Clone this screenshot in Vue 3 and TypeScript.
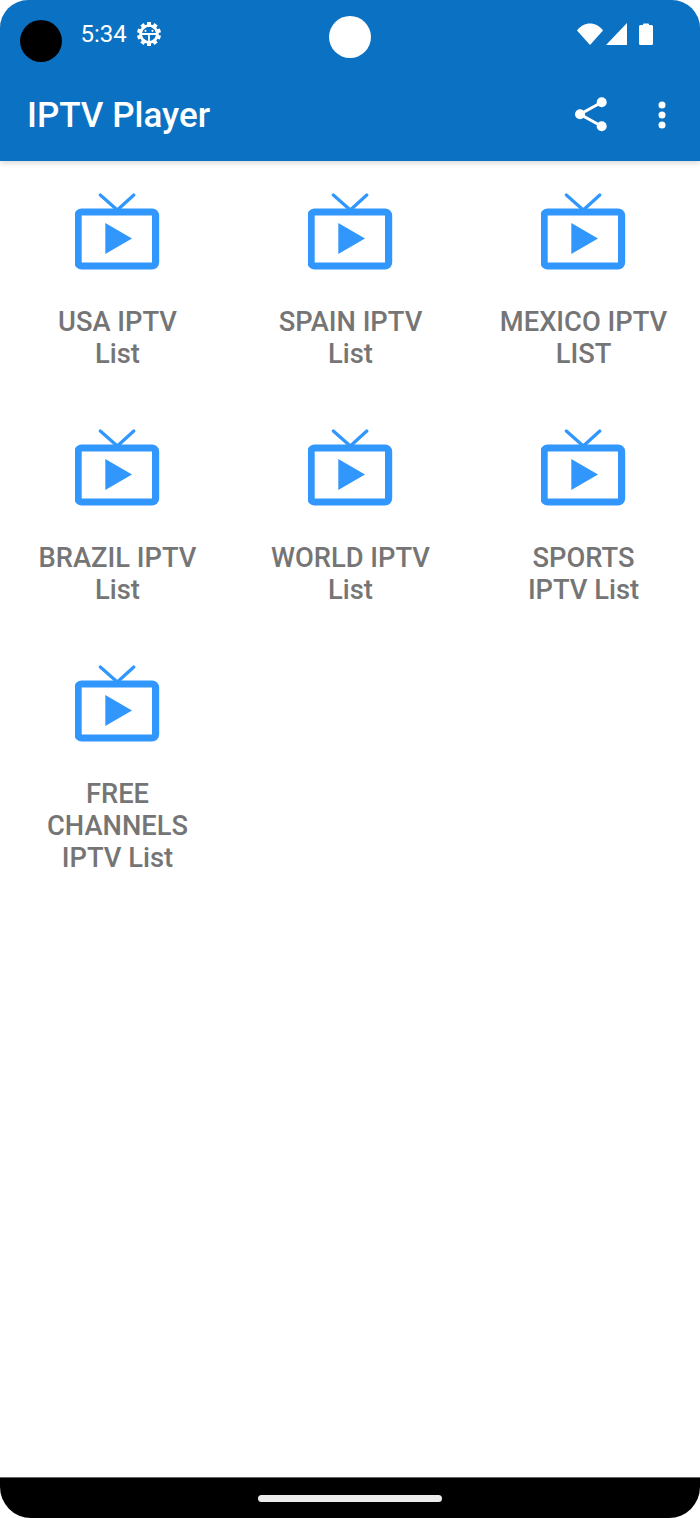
<script setup lang="ts">
const channels: string[][] = [
  ['USA IPTV', 'List'],
  ['SPAIN IPTV', 'List'],
  ['MEXICO IPTV', 'LIST'],
  ['BRAZIL IPTV', 'List'],
  ['WORLD IPTV', 'List'],
  ['SPORTS', 'IPTV List'],
  ['FREE', 'CHANNELS', 'IPTV List'],
]

const gearTeeth = Array.from({ length: 10 }, (_, i) => i * 36)
</script>

<template>
  <div class="phone">
    <header class="app-header">
      <div class="status-bar">
        <span class="time">5:34</span>
        <svg class="gear" viewBox="0 0 26 26" width="26" height="26">
          <rect
            v-for="deg in gearTeeth"
            :key="deg"
            x="11"
            y="1"
            width="4"
            height="5"
            fill="#fff"
            :transform="`rotate(${deg} 13 13)`"
          />
          <circle cx="13" cy="13" r="8.5" fill="none" stroke="#fff" stroke-width="2.6" />
          <path d="M5 13h16M13 13v8" stroke="#fff" stroke-width="1.800" fill="none" />
          <circle cx="9.500" cy="9.800" r="1.100" fill="#fff" />
          <circle cx="16.500" cy="9.800" r="1.100" fill="#fff" />
        </svg>
        <div class="status-icons">
          <svg viewBox="0 0 26 22" width="26" height="22">
            <path d="M0 7.500C3.500 2.800 8 .5 13 .5s9.500 2.300 13 7L13 22z" fill="#fff" />
          </svg>
          <svg viewBox="0 0 21 22" width="21" height="22">
            <path d="M21 0v22H0z" fill="#fff" />
          </svg>
          <svg class="battery" viewBox="0 0 14 22" width="14" height="22">
            <path d="M4 1.500a1 1 0 0 1 1-1h4a1 1 0 0 1 1 1V2h2.500A1.500 1.500 0 0 1 14 3.500V20.500A1.500 1.500 0 0 1 12.500 22h-11A1.500 1.500 0 0 1 0 20.500V3.500A1.500 1.500 0 0 1 1.500 2H4z" fill="#fff" />
          </svg>
        </div>
      </div>
      <div class="toolbar">
        <h1 class="title">IPTV Player</h1>
        <button class="icon-btn share" type="button" aria-label="Share">
          <svg viewBox="0 0 34 36" width="34" height="36">
            <path d="M27.700 5.200 6 17.200 27.700 29.200" fill="none" stroke="#fff" stroke-width="3" />
            <circle cx="27.700" cy="5.200" r="5" fill="#fff" />
            <circle cx="6" cy="17.200" r="5" fill="#fff" />
            <circle cx="27.700" cy="29.200" r="5" fill="#fff" />
          </svg>
        </button>
        <button class="icon-btn more" type="button" aria-label="More">
          <svg viewBox="0 0 8 28" width="8" height="28">
            <circle cx="4" cy="4" r="3.500" fill="#fff" />
            <circle cx="4" cy="14" r="3.500" fill="#fff" />
            <circle cx="4" cy="24" r="3.500" fill="#fff" />
          </svg>
        </button>
      </div>
    </header>

    <main class="grid">
      <div v-for="(lines, i) in channels" :key="i" class="channel">
        <svg class="tv" viewBox="0.7 0 86 78" width="86" height="78">
          <path d="M26 2 43 17 59.500 2" fill="none" stroke="#3197fc" stroke-width="3.200" stroke-linecap="round" />
          <rect x="3.800" y="19" width="77.500" height="54" rx="3.500" fill="none" stroke="#3197fc" stroke-width="7.200" />
          <path d="M31 30 57.700 45.500 31 61z" fill="#3197fc" />
        </svg>
        <div class="label">
          <span v-for="line in lines" :key="line" class="label-line">{{ line }}</span>
        </div>
      </div>
    </main>

    <footer class="nav-bar">
      <span class="home-pill"></span>
    </footer>

    <span class="camera"></span>
    <span class="sensor"></span>
  </div>
</template>

<style>
html,
body {
  background: #fff;
}
</style>

<style scoped>
.phone {
  position: relative;
  width: 700px;
  height: 1518px;
  display: flex;
  flex-direction: column;
  overflow: hidden;
  border-radius: 28px 28px 31px 31px;
  background: #fff;
  font-family: Roboto, 'Liberation Sans', sans-serif;
}

.app-header {
  height: 161px;
  flex: none;
  background: #0b71c2;
  color: #fff;
  box-shadow: 0 2px 6px rgba(0, 0, 0, 0.16);
  z-index: 1;
}

.status-bar {
  height: 68px;
  display: flex;
  align-items: center;
  padding: 0 47px 0 80.500px;
  box-sizing: border-box;
}

.time {
  font-size: 24px;
  line-height: 68px;
}

.gear {
  margin-left: 9.500px;
}

.status-icons {
  margin-left: auto;
  display: flex;
  gap: 3px;
  align-items: center;
}

.battery {
  margin-left: 9px;
}

.toolbar {
  height: 93px;
  display: flex;
  align-items: center;
  padding: 0 34px 0 27px;
  box-sizing: border-box;
}

.title {
  margin: 0;
  padding-top: 3px;
  font-size: 35px;
  font-weight: 500;
  line-height: 40px;
  flex: 1;
}

.icon-btn {
  padding: 0;
  border: none;
  background: none;
  display: flex;
}

.more {
  margin-left: 50px;
}

.grid {
  flex: 1;
  display: grid;
  grid-template-columns: repeat(3, 1fr);
  grid-auto-rows: 236px;
  padding: 32px 0 0 1px;
}

.channel {
  display: flex;
  flex-direction: column;
  align-items: center;
}

.label {
  margin-top: 35px;
  display: flex;
  flex-direction: column;
  align-items: center;
  font-size: 27.300px;
  font-weight: 500;
  line-height: 32px;
  color: #757575;
}

.nav-bar {
  height: 41px;
  flex: none;
  box-sizing: border-box;
  background: #000;
  border-top: 1px solid #666;
  display: flex;
  justify-content: center;
  align-items: center;
}

.home-pill {
  width: 184px;
  height: 7px;
  border-radius: 4px;
  background: #ececec;
}

.camera,
.sensor {
  position: absolute;
  width: 42px;
  height: 42px;
  border-radius: 50%;
  z-index: 2;
}

.camera {
  left: 20px;
  top: 20px;
  background: #000;
}

.sensor {
  left: 329px;
  top: 16px;
  background: #fff;
}
</style>
